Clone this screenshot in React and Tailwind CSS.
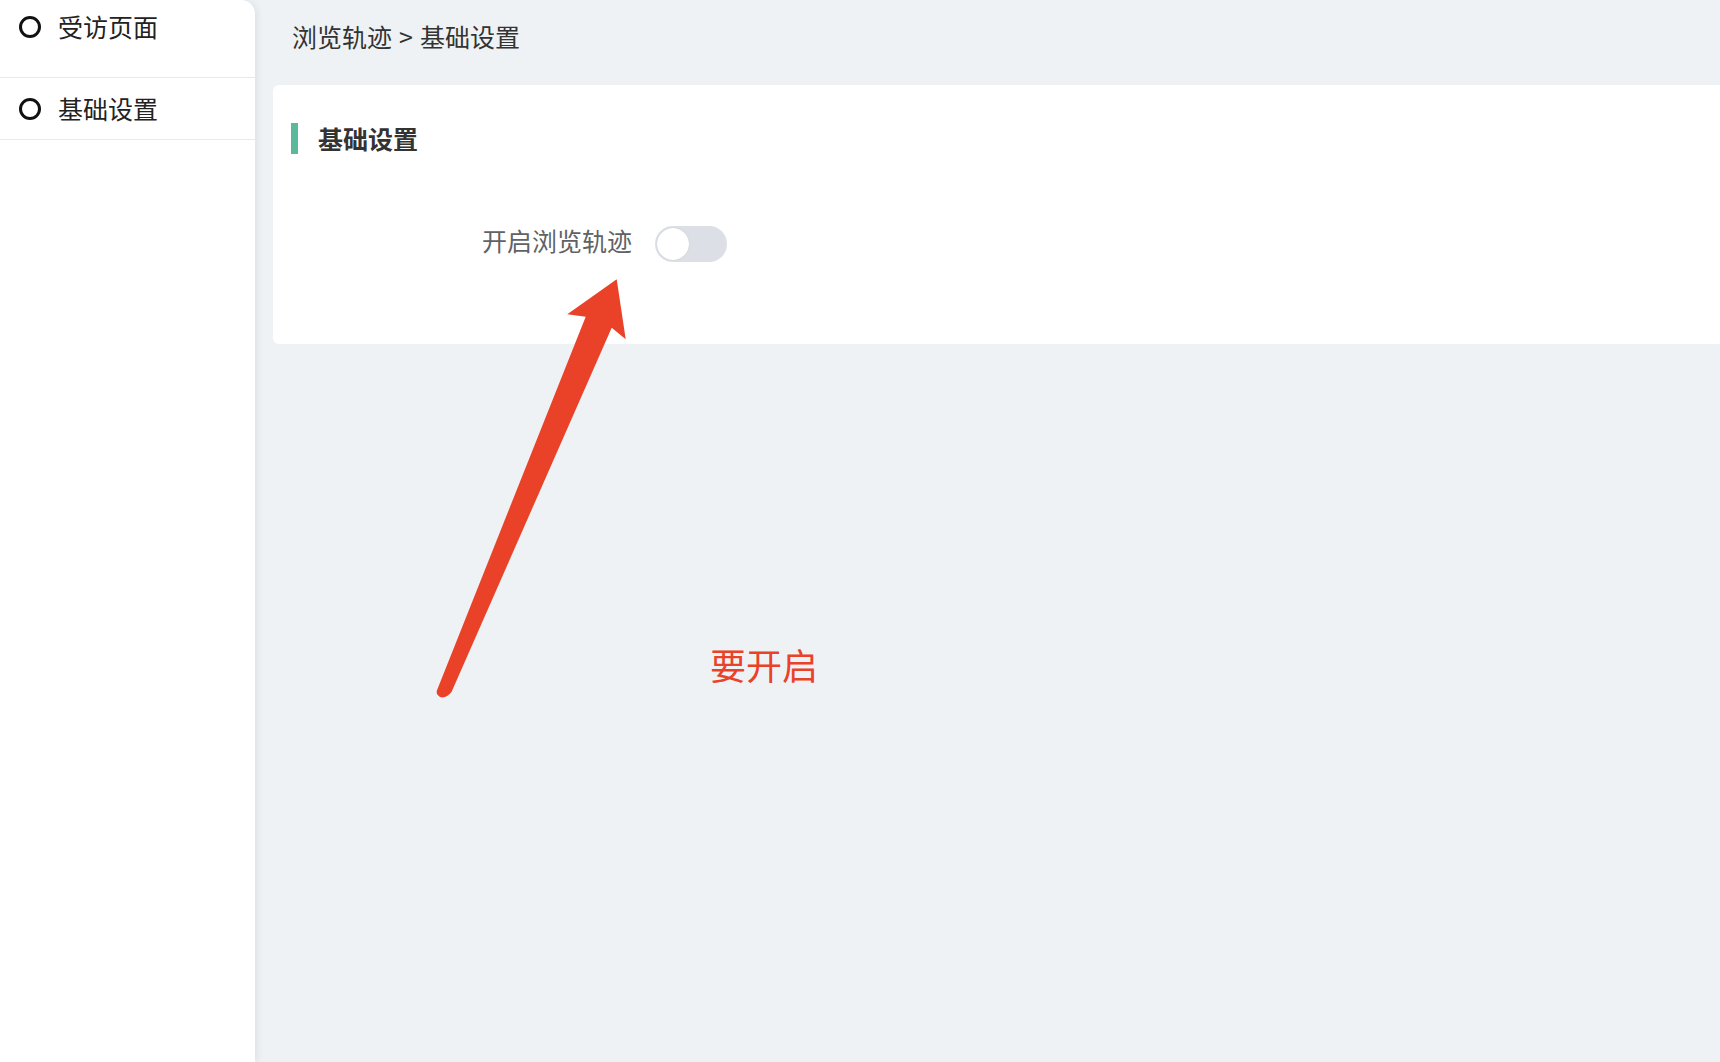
import React from "react";

const font = { fontFamily: '"Noto Sans CJK SC", "Noto Sans", sans-serif' };

function NavItem({ label, className }) {
  return (
    <div className={"flex items-center border-b border-[#e9e9e9] pl-[19px] " + className}>
      <span className="box-border h-[22px] w-[22px] rounded-full border-[3.5px] border-[#111]" />
      <span className="ml-[17px] text-[25px] leading-none text-[#222]">{label}</span>
    </div>
  );
}

export default function App() {
  return (
    <div className="relative flex h-[1062px] w-[1720px] overflow-hidden bg-[#eef2f5] font-['Noto_Sans_CJK_SC',sans-serif]" style={font}>
      <aside className="relative z-10 h-full w-[255px] shrink-0 rounded-tr-[14px] bg-white shadow-[3px_0_6px_rgba(0,0,0,0.06)]">
        <NavItem label="受访页面" className="h-[78px] pb-[24px]" />
        <NavItem label="基础设置" className="h-[62px]" />
      </aside>
      <main className="flex-1 pl-[18px]">
        <div className="flex h-[85px] items-start pt-[21px] pl-[19px] text-[25px] leading-[30px] text-[#333]">
          <span>浏览轨迹</span>
          <span className="mx-[7px]">&gt;</span>
          <span>基础设置</span>
        </div>
        <section className="h-[259px] rounded-l-[6px] bg-white pt-[38px] pl-[18px]">
          <div className="flex items-center">
            <span className="h-[31px] w-[7px] bg-[#5bb99b]" />
            <span className="ml-[20px] text-[25px] font-bold leading-none text-[#333]">基础设置</span>
          </div>
          <div className="mt-[72px] flex items-center">
            <label className="w-[341px] pb-[7px] text-right text-[25px] leading-none text-[#606266]">开启浏览轨迹</label>
            <button className="ml-[23px] flex h-[36px] w-[72px] items-center rounded-full bg-[#dcdfe6] px-[2px]">
              <span className="h-[32px] w-[32px] rounded-full bg-white shadow-[0_0_1px_rgba(0,0,0,0.2)]" />
            </button>
          </div>
        </section>
      </main>
      <svg className="pointer-events-none absolute left-0 top-0" width="1720" height="1062" viewBox="0 0 1720 1062">
        <path
          d="M616.7 279.3 L625.7 339.3 L611.7 327.7 L451.5 692 Q446 699 440 697 Q435 694 437.5 689 L585.7 316.7 L567.3 314.3 Z"
          fill="#ea4228"
        />
      </svg>
      <div className="absolute left-[710px] top-[642px] text-[36px] leading-[44px] text-[#ea4228]">要开启</div>
    </div>
  );
}
